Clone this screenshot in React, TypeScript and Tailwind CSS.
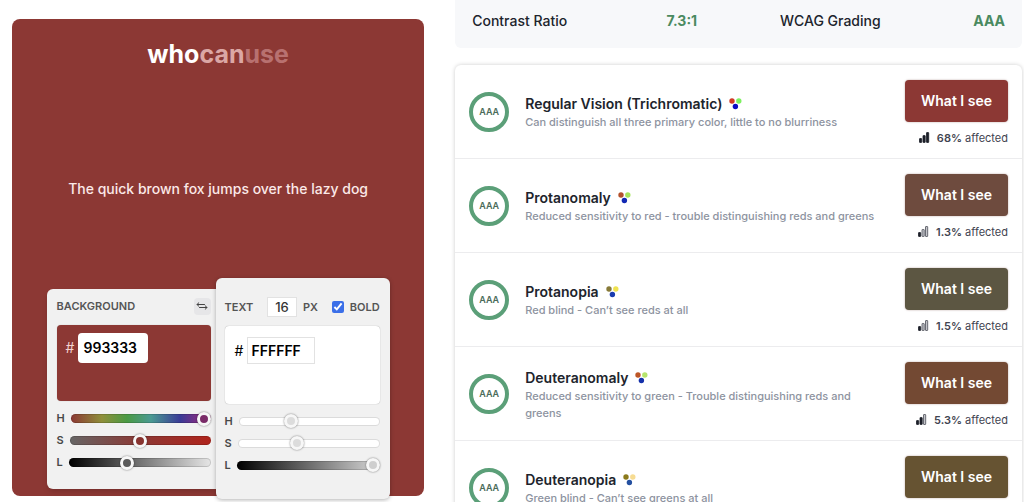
import React, { useState } from 'react';

type Vision = {
  name: string;
  description: string;
  color: string;
  dots: [string, string, string];
  affected: string;
  bars: number;
};

const visions: Vision[] = [
  { name: 'Regular Vision (Trichromatic)', description: 'Can distinguish all three primary color, little to no blurriness', color: 'bg-[#8c3834]', dots: ['#d13a26', '#7df060', '#0a0ac4'], affected: '68%', bars: 3 },
  { name: 'Protanomaly', description: 'Reduced sensitivity to red - trouble distinguishing reds and greens', color: 'bg-[#6e4b3e]', dots: ['#b3512c', '#a6e45c', '#1228b4'], affected: '1.3%', bars: 1 },
  { name: 'Protanopia', description: 'Red blind - Can’t see reds at all', color: 'bg-[#5c5642]', dots: ['#877a38', '#efe250', '#1a3cae'], affected: '1.5%', bars: 1 },
  { name: 'Deuteranomaly', description: 'Reduced sensitivity to green - Trouble distinguishing reds and greens', color: 'bg-[#734933]', dots: ['#bd5626', '#b6e46c', '#1430aa'], affected: '5.3%', bars: 2 },
  { name: 'Deuteranopia', description: 'Green blind - Can’t see greens at all', color: 'bg-[#665332]', dots: ['#8b7a1c', '#f7dc92', '#2450a0'], affected: '1.2%', bars: 1 },
];

const backgroundSliders = [
  { label: 'H', value: 100, track: 'bg-[linear-gradient(90deg,#8c3834,#8f8f3a_22%,#4a9a44_40%,#4a9a92_57%,#3a3a96_78%,#7a2f86_90%,#8a2f6a)]', thumb: '[&::-webkit-slider-thumb]:bg-[#7a2b68]' },
  { label: 'S', value: 50, track: 'bg-[linear-gradient(90deg,#666666,#8c3834_50%,#b0241c)]', thumb: '[&::-webkit-slider-thumb]:bg-[#87332f]' },
  { label: 'L', value: 40, track: 'bg-[linear-gradient(90deg,#000000,#e6e6e6)]', thumb: '[&::-webkit-slider-thumb]:bg-[#5a5a5a]' },
];

const textSliders = [
  { label: 'H', value: 36, track: 'bg-white', thumb: '[&::-webkit-slider-thumb]:bg-[#dcdcdc]' },
  { label: 'S', value: 41, track: 'bg-white', thumb: '[&::-webkit-slider-thumb]:bg-[#dcdcdc]' },
  { label: 'L', value: 100, track: 'bg-[linear-gradient(90deg,#000000,#d8d8d8)]', thumb: '[&::-webkit-slider-thumb]:bg-[#cfcfcf]' },
];

function Slider({ name, label, value, track, thumb }: { name: string; label: string; value: number; track: string; thumb: string }) {
  const id = `${name}-${label}`;
  return (
    <div className="flex h-[22px] items-center gap-1.5">
      <label htmlFor={id} className="text-[11px] font-semibold text-[#484848]">{label}</label>
      <input
        id={id}
        type="range"
        defaultValue={value}
        className={`h-[9px] min-w-0 flex-1 appearance-none rounded-full shadow-[inset_0_0_0_1px_rgba(0,0,0,0.14)] ${track} ${thumb} [&::-webkit-slider-thumb]:size-3.5 [&::-webkit-slider-thumb]:appearance-none [&::-webkit-slider-thumb]:rounded-full [&::-webkit-slider-thumb]:border-[3px] [&::-webkit-slider-thumb]:border-solid [&::-webkit-slider-thumb]:border-[#f7f7f7] [&::-webkit-slider-thumb]:shadow-[0_0_2px_rgba(0,0,0,0.55)]`}
      />
    </div>
  );
}

function ColorDots({ colors }: { colors: [string, string, string] }) {
  return (
    <svg width="13" height="12" viewBox="0 0 13 12" aria-hidden="true">
      <circle cx="3" cy="3" r="2.7" fill={colors[0]} />
      <circle cx="9.8" cy="3" r="2.7" fill={colors[1]} />
      <circle cx="6.4" cy="8.5" r="2.7" fill={colors[2]} />
    </svg>
  );
}

function Bars({ filled }: { filled: number }) {
  const bars = [
    { x: 0.5, h: 4 },
    { x: 4, h: 7 },
    { x: 7.5, h: 10 },
  ];
  return (
    <svg width="11" height="11" viewBox="0 0 11 11" aria-hidden="true">
      {bars.map((b, i) => (
        <rect key={b.x} x={b.x} y={10.5 - b.h} width="2.2" height={b.h} rx="0.4" fill={i < filled ? '#1c1f28' : '#c4c5ca'} stroke={i < filled ? '#1c1f28' : '#4b4e58'} strokeWidth="0.8" />
      ))}
    </svg>
  );
}

export default function App() {
  const [background, setBackground] = useState('993333');
  const [text, setText] = useState('FFFFFF');

  return (
    <div className="grid h-screen grid-cols-[8fr_11fr] gap-[31px] overflow-hidden bg-white pr-0.5 pl-3 font-['Inter','Liberation_Sans',sans-serif] text-[#20242c]">
      <section className="mt-[19px] mb-[6px] flex flex-col rounded-lg bg-[#8c3834]">
        <h1 className="mt-5 text-center text-[25px] leading-[30px] font-bold text-white">
          who<span className="text-[#dba7a5]">can</span><span className="text-[#b87170]">use</span>
        </h1>
        <p className="mt-[30px] flex flex-1 items-center justify-center text-sm font-medium text-[#fbe9e8]">
          The quick brown fox jumps over the lazy dog
        </p>

        <div className="-mb-[3px] flex items-center justify-center">
          <div className="w-[169px] rounded-l-md bg-[#f1f1f1] pt-[9px] pr-[5px] pb-[15px] pl-2.5 shadow-md">
            <div className="flex h-[17px] items-center justify-between">
              <h2 className="text-[11px] font-semibold text-[#555555]">BACKGROUND</h2>
              <button type="button" aria-label="Swap colors" className="flex size-[17px] items-center justify-center rounded-sm bg-[#e6e6e8]">
                <svg width="12" height="8" viewBox="0 0 12 8" fill="none" stroke="#444444" strokeWidth="1" strokeLinecap="round" strokeLinejoin="round" aria-hidden="true">
                  <path d="M8.5 2.5H1M2.8 0.8 1 2.5 2.8 4.2M3.5 5.5H11M9.2 3.8 11 5.5 9.2 7.2" />
                </svg>
              </button>
            </div>
            <div className="mt-2.5 mb-[7px] flex h-[76px] items-start gap-1 rounded-sm bg-[#8c3834] pt-2 pl-[9px] shadow-[0_0_1px_rgba(0,0,0,0.3)]">
              <label htmlFor="background-hex" className="text-sm leading-[30px] text-[#f3d3d1]">#</label>
              <input id="background-hex" value={background} onChange={e => setBackground(e.target.value)} className="h-[30px] w-[70px] rounded-sm bg-white px-[5px] text-sm font-semibold text-black" />
            </div>
            {backgroundSliders.map(s => <Slider key={s.label} name="background" {...s} />)}
          </div>

          <div className="w-[174px] rounded-md bg-[#f1f1f1] pt-[19px] pr-2.5 pb-[23px] pl-[9px] shadow-[0_1px_4px_rgba(0,0,0,0.3)]">
            <div className="flex h-5 items-center justify-between text-[11px] font-semibold text-[#555555]">
              <h2>TEXT</h2>
              <div className="flex items-center gap-1.5">
                <input id="font-size" defaultValue="16" className="h-5 w-[30px] border border-[#e2e2e2] bg-white text-center text-[13px] font-medium text-[#333333]" />
                <label htmlFor="font-size">PX</label>
              </div>
              <label className="flex items-center gap-1.5">
                <input type="checkbox" defaultChecked className="size-3 accent-[#3b6fe8]" />
                BOLD
              </label>
            </div>
            <div className="mt-[9px] mb-1.5 flex h-[78px] items-start gap-1 rounded-sm bg-white pt-[11px] pl-2.5 shadow-[0_0_1px_rgba(0,0,0,0.4)]">
              <label htmlFor="text-hex" className="text-sm leading-[27px] text-black">#</label>
              <input id="text-hex" value={text} onChange={e => setText(e.target.value)} className="h-[27px] w-[68px] border border-[#e2e2e2] bg-white px-[3px] text-sm font-semibold text-black" />
            </div>
            {textSliders.map(s => <Slider key={s.label} name="text" {...s} />)}
          </div>
        </div>
      </section>

      <main className="flex min-h-0 flex-col">
        <dl className="grid shrink-0 grid-cols-2 gap-[83px] rounded-b-md bg-[#f7f8fa] px-[17px] pt-[11px] pb-[17px] text-sm">
          <div className="flex justify-between">
            <dt className="font-medium">Contrast Ratio</dt>
            <dd className="font-bold text-[#4a8a60]">7.3:1</dd>
          </div>
          <div className="flex justify-between">
            <dt className="font-medium">WCAG Grading</dt>
            <dd className="font-bold text-[#4a8a60]">AAA</dd>
          </div>
        </dl>

        <ul className="mt-[17px] shrink-0 rounded-md bg-white shadow-[0_0_4px_rgba(0,0,0,0.2)]">
          {visions.map(v => (
            <li key={v.name} className="flex h-[94px] items-center gap-4 border-b border-[#ececee] px-3.5">
              <div className="flex size-10 shrink-0 items-center justify-center rounded-full border-4 border-[#5b9f78] text-[9px] font-semibold text-[#4b6b5a]">AAA</div>
              <div className="min-w-0 flex-1 pt-0.5 pr-1">
                <h3 className="flex items-center gap-[7px] text-sm leading-5 font-semibold">
                  {v.name}
                  <ColorDots colors={v.dots} />
                </h3>
                <p className="text-[11px] leading-[17px] font-medium text-[#8d93a0]">{v.description}</p>
              </div>
              <div className="flex shrink-0 flex-col items-end gap-2 pt-0.5">
                <button type="button" className={`h-[42px] w-[103px] rounded-sm text-sm font-semibold text-white shadow-[0_0_2px_rgba(80,20,10,0.4)] ${v.color}`}>What I see</button>
                <p className="flex items-center gap-[7px] text-[11px] leading-4 text-[#3f4450]">
                  <Bars filled={v.bars} />
                  <span><strong className="font-semibold">{v.affected}</strong> affected</span>
                </p>
              </div>
            </li>
          ))}
        </ul>
      </main>
    </div>
  );
}
